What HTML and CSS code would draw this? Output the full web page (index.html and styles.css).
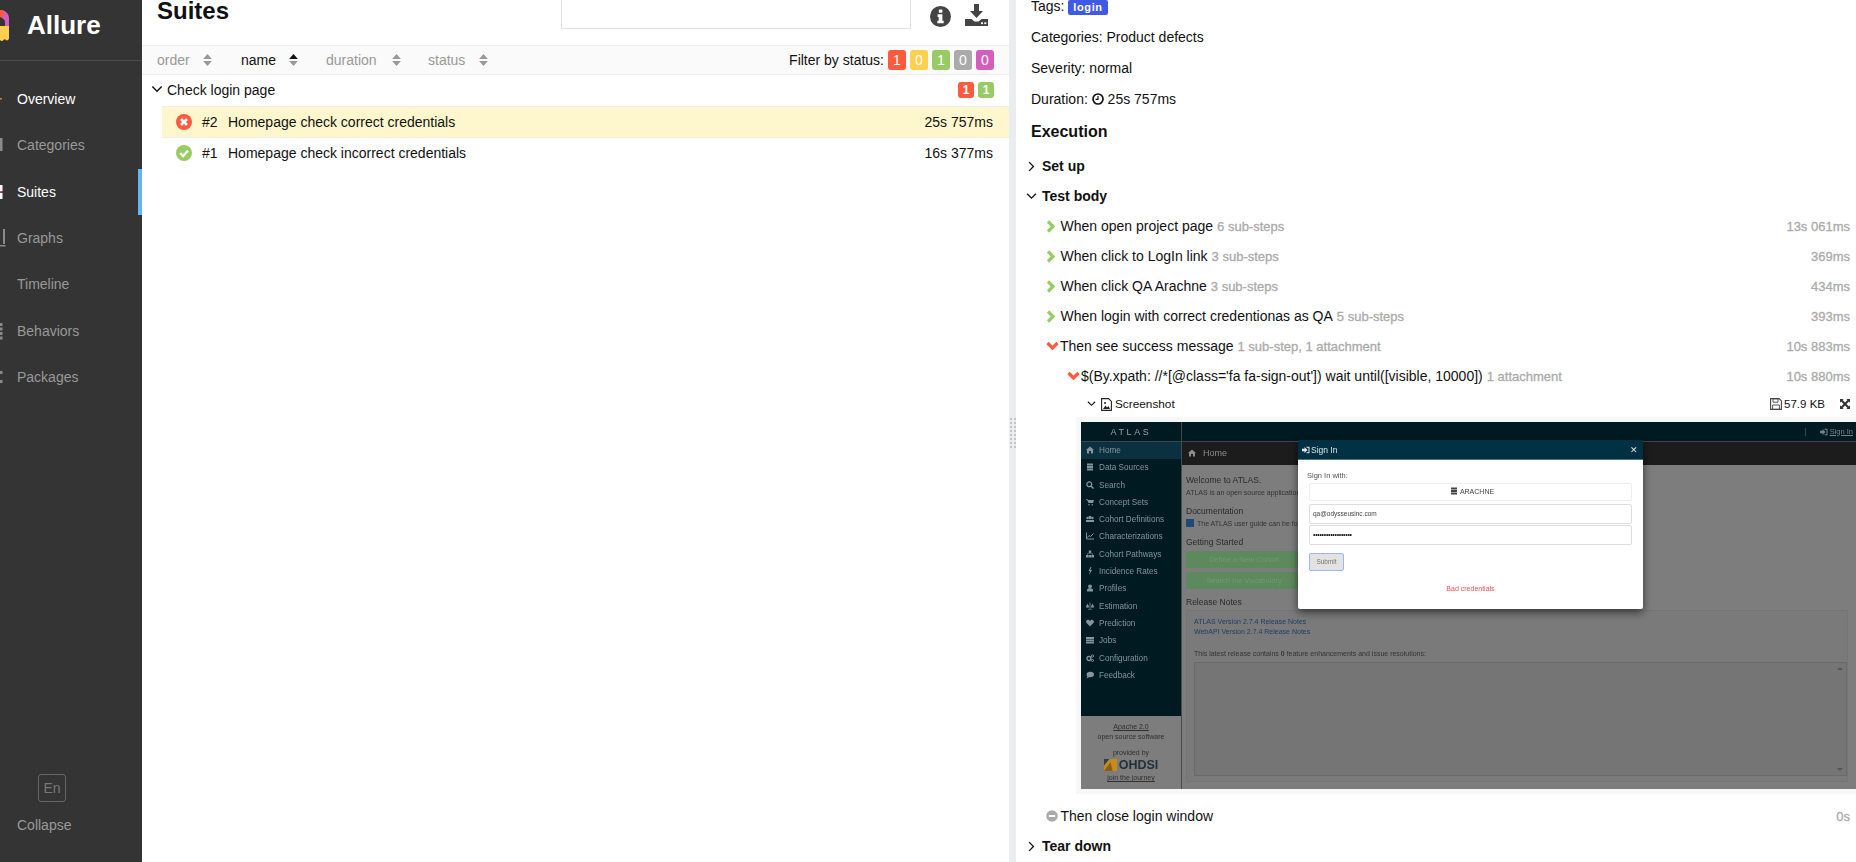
FILE: index.html
```html
<!DOCTYPE html>
<html lang="en">
<head>
    <meta charset="utf-8" />
    <title>Allure Report</title>
    <link rel="stylesheet" href="styles.css">
</head>
<body>
<svg class="defs" width="0" height="0">
    <symbol id="sort" viewBox="0 0 8 11"><path d="M4 0 8 4.500H0Z"/><path d="M4 11 8 6.500H0Z"/></symbol>
    <symbol id="thin-down" viewBox="0 0 10 6"><path d="M1 .5 5 4.500 9 .5" fill="none" stroke="#111" stroke-width="1.200"/></symbol>
    <symbol id="thin-right" viewBox="0 0 6 10"><path d="M.8 1 4.800 5 .8 9" fill="none" stroke="#111" stroke-width="1.200"/></symbol>
    <symbol id="fat-right" viewBox="0 0 10 13"><path d="M2 1.500 7 6.500 2 11.500" fill="none" stroke="#97cc64" stroke-width="3.200"/></symbol>
    <symbol id="fat-down" viewBox="0 0 13 10"><path d="M1.500 2 6.500 7 11.500 2" fill="none" stroke="#fd5a3e" stroke-width="3.200"/></symbol>
    <symbol id="i-home" viewBox="0 0 8 8"><path d="M4 .5 8 4H7V7.500H5V5H3V7.500H1V4H0Z"/></symbol>
    <symbol id="i-db" viewBox="0 0 8 8"><path d="M1 .5H7V2.500H1zM1 3H7V5H1zM1 5.500H7V7.500H1z"/></symbol>
    <symbol id="i-search" viewBox="0 0 8 8"><circle cx="3.300" cy="3.300" r="2.400" fill="none" stroke="currentColor" stroke-width="1.300"/><path d="M5 5 7.500 7.500" stroke="currentColor" stroke-width="1.500"/></symbol>
    <symbol id="i-cart" viewBox="0 0 8 8"><path d="M0 1H1.500L2 2H8L7 5H2.500L1 1.800H0Z"/><circle cx="3" cy="6.700" r=".8"/><circle cx="6.300" cy="6.700" r=".8"/></symbol>
    <symbol id="i-users" viewBox="0 0 8 8"><circle cx="4" cy="2.500" r="1.700"/><circle cx="1.500" cy="3" r="1.200"/><circle cx="6.500" cy="3" r="1.200"/><path d="M0 7V5H8V7Z"/></symbol>
    <symbol id="i-chart" viewBox="0 0 8 8"><path d="M.5 .5V7H8" fill="none" stroke="currentColor"/><path d="M1.500 5.500 3 3.500 4.500 4.500 7.500 1.500" fill="none" stroke="currentColor"/></symbol>
    <symbol id="i-tree" viewBox="0 0 8 8"><path d="M2.800 .5H5.200V3H2.800zM0 5H2.500V7.500H0zM2.800 5H5.200V7.500H2.800zM5.500 5H8V7.500H5.500zM1 3.500H7V5H6.500V4H1.500V5H1Z"/></symbol>
    <symbol id="i-bolt" viewBox="0 0 8 8"><path d="M4.500 0 2.500 4H4L3 8 6 3H4.300L5.500 0Z"/></symbol>
    <symbol id="i-user" viewBox="0 0 8 8"><circle cx="4" cy="2.300" r="1.900"/><path d="M1 7.500V6C1 4.800 2 4.300 4 4.300S7 4.800 7 6V7.500Z"/></symbol>
    <symbol id="i-scale" viewBox="0 0 8 8"><path d="M3.600 .5H4.400V7H6V7.600H2V7H3.600ZM0 4.500 1.500 1.500 3 4.500A1.500 1.200 0 0 1 0 4.500ZM5 4.500 6.500 1.500 8 4.500A1.500 1.200 0 0 1 5 4.500Z"/></symbol>
    <symbol id="i-heart" viewBox="0 0 8 8"><path d="M4 7.500 .6 4C-.6 2.400 .6 .8 2 .8 3 .8 3.600 1.400 4 2 4.400 1.400 5 .8 6 .8 7.400 .8 8.600 2.400 7.400 4Z"/></symbol>
    <symbol id="i-server" viewBox="0 0 8 8"><path d="M0 1H8V3H0zM0 3.500H8V5H0zM0 5.500H8V7.500H0z"/></symbol>
    <symbol id="i-cog" viewBox="0 0 8 8"><circle cx="3" cy="4.500" r="2" fill="none" stroke="currentColor" stroke-width="1.400"/><circle cx="6.500" cy="2" r="1.100" fill="none" stroke="currentColor"/><circle cx="6.500" cy="6.500" r="1" fill="none" stroke="currentColor"/></symbol>
    <symbol id="i-chat" viewBox="0 0 8 8"><ellipse cx="4.300" cy="3.500" rx="3.700" ry="2.800"/><path d="M1.500 5 .5 7.500 3.500 6Z"/></symbol>
    <symbol id="i-signin" viewBox="0 0 8 8"><path d="M0 2.800H2.500V1L5.500 4 2.500 7V5.200H0Z"/><path d="M4.500 .8H7.500V7.200H4.500V6.300H6.500V1.700H4.500Z"/></symbol>
</svg>
<div class="app">
    <aside class="sidebar">
        <div class="brand">
            <svg class="logo" width="10" height="32" viewBox="0 0 10 32">
                <path d="M0 0H2C6 1 9 4 9 8V16H5V12C5 10 3 8 0 7Z" fill="#d35ebe"/>
                <path d="M0 0H2.500C3.500 1.500 4 4 4 7L0 7Z" fill="#fd5a3e"/>
                <path d="M0 16H9V28C9 30 7 31 6 30 5 29 4 29 3.500 30 2.500 31.500 1 31 0 30Z" fill="#ffd050"/>
            </svg>
            <span class="brand-name">Allure</span>
        </div>
        <nav class="menu">
            <a class="menu-item is-on"><svg class="menu-icon" viewBox="0 0 6 20"><rect x="0" y="9" width="2" height="1.500" fill="#e8743b"/></svg>Overview</a>
            <a class="menu-item"><svg class="menu-icon" viewBox="0 0 6 20"><rect x="0" y="3" width="2.500" height="13" fill="#8a8a8a"/></svg>Categories</a>
            <a class="menu-item is-on is-current"><svg class="menu-icon" viewBox="0 0 6 20"><rect x="0" y="3" width="2.500" height="6" fill="#fff"/><rect x="0" y="9" width="2.500" height="1.500" fill="#e04a4a"/><rect x="0" y="11" width="2.500" height="6" fill="#fff"/></svg>Suites</a>
            <a class="menu-item"><svg class="menu-icon" viewBox="0 0 6 20"><rect x="3" y="1" width="2" height="15" fill="#8a8a8a"/><rect x="0" y="17" width="5.500" height="1.500" fill="#8a8a8a"/></svg>Graphs</a>
            <a class="menu-item"><span class="menu-icon"></span>Timeline</a>
            <a class="menu-item"><svg class="menu-icon" viewBox="0 0 6 20"><path d="M0 2h2.500v3H0zM0 6.500h2.500v3H0zM0 11h2.500v3H0zM0 15.500h2.500v3H0z" fill="#8a8a8a"/></svg>Behaviors</a>
            <a class="menu-item"><svg class="menu-icon" viewBox="0 0 6 20"><path d="M0 4h2.500v3H0zM0 13h2.500v3H0z" fill="#8a8a8a"/></svg>Packages</a>
        </nav>
        <div class="side-foot">
            <div class="lang">En</div>
            <a class="collapse">Collapse</a>
        </div>
    </aside>

    <main class="suites">
        <header class="suites-head">
            <h2 class="suites-title">Suites</h2>
            <div class="search"></div>
            <svg class="tool-info" width="21" height="21" viewBox="0 0 21 21">
                <circle cx="10.500" cy="10.500" r="10.500" fill="#444"/>
                <rect x="8.800" y="3.500" width="3.600" height="3.200" rx=".6" fill="#fff"/>
                <path d="M7.600 8.300h4.800v6.400h1.300v2.600H7.400v-2.600h1.300v-3.800H7.600z" fill="#fff"/>
            </svg>
            <svg class="tool-save" width="23" height="22" viewBox="0 0 23 22">
                <path d="M9 0h5v7h4l-6.500 7L5 7h4z" fill="#444"/>
                <path d="M0 15h6.500l3 2.500h4l3-2.500H23v7H0z" fill="#444"/>
                <rect x="16" y="18.300" width="2" height="1.800" fill="#fff"/><rect x="19.300" y="18.300" width="2" height="1.800" fill="#fff"/>
            </svg>
        </header>
        <div class="toolbar">
            <span class="sorter s-order">order<svg class="sort-icon"><use href="#sort"/></svg></span>
            <span class="sorter s-name is-sorted">name<svg class="sort-icon" viewBox="0 0 8 11"><path d="M4 0 8 4.500H0Z" fill="#111"/><path d="M4 11 8 6.500H0Z" fill="#999"/></svg></span>
            <span class="sorter s-duration">duration<svg class="sort-icon"><use href="#sort"/></svg></span>
            <span class="sorter s-status">status<svg class="sort-icon"><use href="#sort"/></svg></span>
            <div class="filter">
                Filter by status:
                <span class="count red">1</span>
                <span class="count yellow">0</span>
                <span class="count green">1</span>
                <span class="count grey">0</span>
                <span class="count pink">0</span>
            </div>
        </div>
        <div class="group">
            <svg class="group-arrow"><use href="#thin-down"/></svg>
            <span class="group-name">Check login page</span>
            <span class="mini red">1</span>
            <span class="mini green">1</span>
        </div>
        <div class="case is-picked">
            <svg class="case-status" viewBox="0 0 16 16"><circle cx="8" cy="8" r="8" fill="#fd5a3e"/><path d="M5 5 11 11M11 5 5 11" stroke="#fff" stroke-width="2.600"/></svg>
            <span class="case-order">#2</span>
            <span class="case-name">Homepage check correct credentials</span>
            <span class="case-time">25s 757ms</span>
        </div>
        <div class="case">
            <svg class="case-status" viewBox="0 0 16 16"><circle cx="8" cy="8" r="8" fill="#97cc64"/><path d="M4.200 8.200 7 11 12 5.600" fill="none" stroke="#fff" stroke-width="2.400"/></svg>
            <span class="case-order">#1</span>
            <span class="case-name">Homepage check incorrect credentials</span>
            <span class="case-time">16s 377ms</span>
        </div>
    </main>

    <div class="divider"><span class="grip"></span></div>

    <section class="detail">
        <div class="meta">Tags: <span class="tag">login</span></div>
        <div class="meta">Categories: Product defects</div>
        <div class="meta">Severity: normal</div>
        <div class="meta">Duration:
            <svg class="clock" width="12" height="12" viewBox="0 0 12 12"><circle cx="6" cy="6" r="5" fill="none" stroke="#111" stroke-width="1.700"/><path d="M6 3v3.300H3.500" fill="none" stroke="#111" stroke-width="1.200"/></svg>
            25s 757ms</div>
        <h3 class="exec-title">Execution</h3>

        <div class="stage"><svg class="stage-arrow is-right"><use href="#thin-right"/></svg>Set up</div>
        <div class="stage"><svg class="stage-arrow"><use href="#thin-down"/></svg>Test body</div>

        <div class="step">
            <svg class="step-arrow"><use href="#fat-right"/></svg>
            <span>When open project page</span><span class="step-hint">6 sub-steps</span>
            <span class="step-time">13s 061ms</span>
        </div>
        <div class="step">
            <svg class="step-arrow"><use href="#fat-right"/></svg>
            <span>When click to LogIn link</span><span class="step-hint">3 sub-steps</span>
            <span class="step-time">369ms</span>
        </div>
        <div class="step">
            <svg class="step-arrow"><use href="#fat-right"/></svg>
            <span>When click QA Arachne</span><span class="step-hint">3 sub-steps</span>
            <span class="step-time">434ms</span>
        </div>
        <div class="step">
            <svg class="step-arrow"><use href="#fat-right"/></svg>
            <span>When login with correct credentionas as QA</span><span class="step-hint">5 sub-steps</span>
            <span class="step-time">393ms</span>
        </div>
        <div class="step">
            <svg class="step-arrow is-down"><use href="#fat-down"/></svg>
            <span>Then see success message</span><span class="step-hint">1 sub-step, 1 attachment</span>
            <span class="step-time">10s 883ms</span>
        </div>
        <div class="step is-nested">
            <svg class="step-arrow is-down"><use href="#fat-down"/></svg>
            <span>$(By.xpath: //*[@class='fa fa-sign-out']) wait until([visible, 10000])</span><span class="step-hint">1 attachment</span>
            <span class="step-time">10s 880ms</span>
        </div>

        <div class="attach-row">
            <svg class="attach-arrow"><use href="#thin-down"/></svg>
            <svg class="attach-file" width="11" height="13" viewBox="0 0 11 13"><path d="M.6.6h7l2.800 2.800v9H.6z" fill="#fff" stroke="#222" stroke-width="1.100"/><path d="M2 11 4.500 7.500 6 9.500 7.500 8 9 11z" fill="#222"/><circle cx="4" cy="5" r="1" fill="#222"/></svg>
            <span class="attach-name">Screenshot</span>
            <svg class="attach-disk" width="12" height="12" viewBox="0 0 12 12"><path d="M.6.6h8.500l2.300 2.300v8.500H.6z" fill="none" stroke="#444" stroke-width="1.100"/><path d="M3 .8h5v3.400H3zM2.600 7h6.800v4.400H2.600z" fill="none" stroke="#444" stroke-width=".9"/></svg>
            <span class="attach-size">57.9 KB</span>
            <svg class="attach-full" width="10" height="10" viewBox="0 0 11 11"><path d="M0 0h4L2.800 1.200 5.500 3.900 8.200 1.200 7 0h4v4L9.800 2.800 7.100 5.500 9.800 8.200 11 7v4H7L8.200 9.800 5.500 7.100 2.800 9.800 4 11H0V7L1.200 8.200 3.900 5.500 1.200 2.800 0 4z" fill="#333"/></svg>
        </div>

        <div class="attach-box">
            <div class="atlas">
                <div class="atlas-side">
                    <div class="atlas-brand">ATLAS</div>
                    <div class="atlas-nav">
                        <div class="atlas-link is-home"><svg class="a-ico"><use href="#i-home"/></svg>Home</div>
                        <div class="atlas-link"><svg class="a-ico"><use href="#i-db"/></svg>Data Sources</div>
                        <div class="atlas-link"><svg class="a-ico"><use href="#i-search"/></svg>Search</div>
                        <div class="atlas-link"><svg class="a-ico"><use href="#i-cart"/></svg>Concept Sets</div>
                        <div class="atlas-link"><svg class="a-ico"><use href="#i-users"/></svg>Cohort Definitions</div>
                        <div class="atlas-link"><svg class="a-ico"><use href="#i-chart"/></svg>Characterizations</div>
                        <div class="atlas-link"><svg class="a-ico"><use href="#i-tree"/></svg>Cohort Pathways</div>
                        <div class="atlas-link"><svg class="a-ico"><use href="#i-bolt"/></svg>Incidence Rates</div>
                        <div class="atlas-link"><svg class="a-ico"><use href="#i-user"/></svg>Profiles</div>
                        <div class="atlas-link"><svg class="a-ico"><use href="#i-scale"/></svg>Estimation</div>
                        <div class="atlas-link"><svg class="a-ico"><use href="#i-heart"/></svg>Prediction</div>
                        <div class="atlas-link"><svg class="a-ico"><use href="#i-server"/></svg>Jobs</div>
                        <div class="atlas-link"><svg class="a-ico"><use href="#i-cog"/></svg>Configuration</div>
                        <div class="atlas-link"><svg class="a-ico"><use href="#i-chat"/></svg>Feedback</div>
                    </div>
                    <div class="atlas-foot">
                        <u>Apache 2.0</u>
                        <span>open source software</span>
                        <span class="atlas-by">provided by</span>
                        <span class="ohdsi"><svg width="13" height="12" viewBox="0 0 12 11"><path d="M0 0h12v11H0z" fill="#c98a1c"/><path d="M0 0h5L0 6z" fill="#2f3f4a"/><path d="M0 11 6 3 8 11z" fill="#8a5f14"/></svg>OHDSI</span>
                        <u>join the journey</u>
                    </div>
                </div>
                <div class="atlas-body">
                    <div class="atlas-top"><span class="atlas-sep"></span><svg class="a-ico"><use href="#i-signin"/></svg><u>Sign In</u></div>
                    <div class="atlas-bar"><svg class="a-ico"><use href="#i-home"/></svg>Home</div>
                    <div class="atlas-main">
                        <div class="a-h">Welcome to ATLAS.</div>
                        <div class="a-p">ATLAS is an open source application developed as a part of OHDSI</div>
                        <div class="a-h a-doc">Documentation</div>
                        <div class="a-p"><i class="a-book"></i>The ATLAS user guide can be found here</div>
                        <div class="a-h a-start">Getting Started</div>
                        <div class="a-btn">Define a New Cohort</div>
                        <div class="a-btn">Search the Vocabulary</div>
                        <div class="a-h a-notes">Release Notes</div>
                        <div class="a-panel">
                            <div class="a-link">ATLAS Version 2.7.4 Release Notes</div>
                            <div class="a-link">WebAPI Version 2.7.4 Release Notes</div>
                            <div class="a-p a-latest">This latest release contains <b>0</b> feature enhancements and issue resolutions:</div>
                            <div class="a-area"><span class="a-up"></span><span class="a-down"></span></div>
                        </div>
                    </div>
                </div>
                <div class="modal">
                    <div class="modal-head"><span class="modal-title"><svg class="a-ico"><use href="#i-signin"/></svg>Sign In</span><span class="modal-x">&#10005;</span></div>
                    <div class="modal-body">
                        <div class="modal-label">Sign In with:</div>
                        <div class="modal-field is-pick"><svg class="a-ico"><use href="#i-db"/></svg>ARACHNE</div>
                        <div class="modal-field is-mail">qa@odysseusinc.com</div>
                        <div class="modal-field is-pass">&#8226;&#8226;&#8226;&#8226;&#8226;&#8226;&#8226;&#8226;&#8226;&#8226;&#8226;&#8226;&#8226;&#8226;&#8226;&#8226;&#8226;&#8226;</div>
                        <div class="modal-submit">Submit</div>
                        <div class="modal-error">Bad credentials</div>
                    </div>
                </div>
            </div>
        </div>

        <div class="step">
            <svg class="step-arrow is-round" viewBox="0 0 12 12"><circle cx="6" cy="6" r="5.800" fill="#aaa"/><rect x="2.800" y="5" width="6.400" height="2" fill="#fff"/></svg>
            <span>Then close login window</span>
            <span class="step-time">0s</span>
        </div>
        <div class="stage"><svg class="stage-arrow is-right"><use href="#thin-right"/></svg>Tear down</div>
    </section>
</div>
</body>
</html>
```

FILE: styles.css
```css
html, body {
    margin: 0;
    height: 100%;
    overflow: hidden;
}

body {
    font-family: "Liberation Sans", Arial, sans-serif;
    font-size: 14px;
    color: #111;
    background: #fff;
}

.defs {
    position: absolute;
}

.app {
    display: flex;
    height: 862px;
}

/* left menu */
.sidebar {
    width: 142px;
    flex: none;
    display: flex;
    flex-direction: column;
    background: #343434;
    color: #999;
}

.brand {
    height: 61px;
    box-sizing: border-box;
    display: flex;
    align-items: flex-start;
    border-bottom: 1px solid #4c4c4c;
}

.logo {
    margin-top: 10px;
    flex: none;
}

.brand-name {
    margin: 8px 0 0 17px;
    font-size: 26px;
    line-height: 34px;
    font-weight: bold;
    color: #fff;
}

.menu {
    padding-top: 15px;
}

.menu-item {
    display: flex;
    align-items: center;
    height: 46.3px;
    box-sizing: border-box;
}

.menu-item.is-on {
    color: #fff;
}

.menu-item.is-current {
    border-right: 4px solid #64b5f6;
}

.menu-icon {
    width: 6px;
    height: 20px;
    margin-right: 11px;
    flex: none;
}

.side-foot {
    margin-top: auto;
    padding-bottom: 29px;
}

.lang {
    width: 26px;
    height: 26px;
    margin-left: 38px;
    border: 1px solid #666;
    border-radius: 3px;
    text-align: center;
    line-height: 26px;
    color: #777;
}

.collapse {
    display: block;
    margin: 15px 0 0 17px;
    line-height: 16px;
}

/* suites list */
.suites {
    width: 867px;
    flex: none;
}

.suites-head {
    height: 45px;
    display: flex;
    align-items: flex-start;
    padding-left: 15px;
}

.suites-title {
    margin: -3px auto 0 0;
    font-size: 24px;
    line-height: 28px;
}

.search {
    width: 348px;
    height: 28px;
    border: 1px solid #e2e2e2;
    border-top: 0;
}

.tool-info {
    margin: 6px 0 0 19px;
}

.tool-save {
    margin: 4px 21px 0 14px;
}

.toolbar {
    height: 30px;
    box-sizing: border-box;
    display: flex;
    align-items: center;
    padding: 0 15px;
    background: #fafafa;
    border-top: 1px solid #eee;
    border-bottom: 1px solid #eee;
}

.sorter {
    display: flex;
    align-items: center;
    color: #999;
}

.sorter.is-sorted {
    color: #111;
}

.sort-icon {
    width: 9px;
    height: 12px;
    margin-left: 13px;
    fill: #999;
}

.s-order {
    width: 84px;
}

.s-name {
    width: 85px;
}

.s-duration {
    width: 102px;
}

.s-duration .sort-icon {
    margin-left: 15px;
}

.s-status .sort-icon {
    margin-left: 14px;
}

.filter {
    margin-left: auto;
    display: flex;
    align-items: center;
    gap: 4px;
    white-space: pre;
}

.count {
    width: 18px;
    height: 20px;
    border-radius: 3px;
    color: #fff;
    text-align: center;
    line-height: 20px;
}

.mini {
    width: 16px;
    height: 16px;
    margin-left: 4px;
    border-radius: 3px;
    color: #fff;
    font-size: 12px;
    font-weight: bold;
    text-align: center;
    line-height: 16px;
}

.red { background: #fd5a3e; }
.yellow { background: #ffd050; }
.green { background: #97cc64; }
.grey { background: #aaa; }
.pink { background: #d35ebe; }

.group {
    height: 31px;
    box-sizing: border-box;
    display: flex;
    align-items: center;
    padding: 0 15px 2px 9px;
}

.group-arrow {
    width: 12px;
    height: 7px;
    margin-right: 4px;
}

.group-name {
    margin-right: auto;
}

.case {
    height: 31px;
    box-sizing: border-box;
    margin-left: 20px;
    display: flex;
    align-items: center;
    padding: 0 16px 0 14px;
    border-top: 1px solid #eee;
}

.case.is-picked {
    background: #fef7cd;
}

.case-status {
    width: 16px;
    height: 16px;
    flex: none;
}

.case-order {
    width: 26px;
    margin-left: 10px;
}

.case-time {
    margin-left: auto;
}

.divider {
    width: 7px;
    flex: none;
    display: flex;
    align-items: center;
    justify-content: center;
    background: #e9edf0;
}

.grip {
    width: 6px;
    height: 32px;
    margin-top: 6px;
    background-image: radial-gradient(circle at 1px 1px, #c4c4c4 1.200px, transparent 1.300px);
    background-size: 4px 4px;
}

/* test detail */
.detail {
    flex: 1;
    min-width: 0;
    margin-top: -9px;
    padding: 0 6px 0 15px;
}

.meta {
    height: 31px;
    line-height: 31px;
}

.tag {
    display: inline-block;
    padding: 0 5px;
    height: 15px;
    line-height: 15px;
    border-radius: 2px;
    background: #415ae6;
    color: #fff;
    font-size: 11px;
    font-weight: bold;
    letter-spacing: .6px;
}

.clock {
    vertical-align: -1px;
}

.exec-title {
    margin: 0;
    height: 36px;
    font-size: 16px;
    line-height: 33px;
}

.stage {
    height: 30px;
    margin-left: -5px;
    display: flex;
    align-items: center;
    font-weight: bold;
}

.stage-arrow {
    width: 11px;
    height: 7px;
    margin-right: 5px;
    flex: none;
}

.stage-arrow.is-right {
    width: 7px;
    height: 11px;
    margin: 0 7px 0 2px;
}

.step {
    height: 30px;
    display: flex;
    align-items: center;
    padding-left: 15px;
    white-space: nowrap;
}

.step.is-nested {
    padding-left: 36px;
}

.step-arrow {
    width: 10px;
    height: 13px;
    margin-right: 4.500px;
    flex: none;
}

.step-arrow.is-down {
    width: 13px;
    height: 10px;
    margin-right: 1px;
}

.step-arrow.is-round {
    width: 12px;
    height: 12px;
    margin-right: 2.500px;
}

.step-hint {
    margin-left: 4px;
    color: #aaa;
    font-size: 13px;
    -webkit-text-stroke: .3px #aaa;
}

.step-time {
    margin-left: auto;
    color: #aaa;
    font-size: 13px;
    -webkit-text-stroke: .3px #aaa;
}

.attach-row {
    height: 26px;
    display: flex;
    align-items: center;
    padding-left: 56px;
    font-size: 12px;
}

.attach-arrow {
    width: 9px;
    height: 6px;
    flex: none;
}

.attach-file {
    margin: 0 3px 0 5px;
}

.attach-name {
    font-size: 11.800px;
}

.attach-disk {
    margin-left: auto;
    margin-right: 2px;
}

.attach-size {
    font-size: 11.500px;
}

.attach-full {
    margin-left: 15px;
}

.attach-box {
    height: 367px;
    margin: 0 -6px 7px 45px;
    padding: 5px 0 5px 5px;
    background: #f7f7f7;
}

/* the screenshot inside the attachment */
.atlas {
    position: relative;
    height: 367px;
    display: flex;
    overflow: hidden;
    font-size: 7.500px;
    line-height: 10px;
    background: #7d7d7d;
    color: #333;
    filter: blur(.35px);
}

.a-ico {
    width: 8px;
    height: 8px;
    margin-right: 5px;
    fill: currentColor;
    vertical-align: -1px;
    flex: none;
}

.atlas-side {
    width: 100px;
    flex: none;
    display: flex;
    flex-direction: column;
    border-right: 1px solid #4a4a4a;
}

.atlas-brand {
    height: 20px;
    box-sizing: border-box;
    background: #001a22;
    border-bottom: 1px solid #39474c;
    color: #93a2a7;
    text-align: center;
    font-size: 9px;
    line-height: 20px;
    letter-spacing: 2.600px;
}

.atlas-nav {
    height: 274px;
    background: #001a22;
    color: #84959b;
}

.atlas-link {
    height: 17.300px;
    padding-left: 5px;
    line-height: 17px;
    font-size: 8.200px;
}

.atlas-link.is-home {
    background: #0b3140;
}

.atlas-foot {
    flex: 1;
    display: flex;
    flex-direction: column;
    align-items: center;
    padding-top: 6px;
    color: #2f2f2f;
    font-size: 7px;
}

.atlas-by {
    margin-top: 6px;
}

.ohdsi {
    display: flex;
    align-items: center;
    gap: 2px;
    margin-bottom: 1px;
    color: #22313a;
    font-size: 12.500px;
    font-weight: bold;
    line-height: 14px;
}

.atlas-body {
    flex: 1;
    min-width: 0;
    display: flex;
    flex-direction: column;
}

.atlas-top {
    height: 20px;
    box-sizing: border-box;
    display: flex;
    align-items: center;
    justify-content: flex-end;
    padding-right: 3px;
    background: #001a22;
    border-bottom: 1px solid #444;
    color: #73858b;
}

.atlas-top .a-ico {
    margin-right: 2px;
}

.atlas-sep {
    width: 1px;
    height: 8px;
    margin-right: 14px;
    background: #33474e;
}

.atlas-bar {
    height: 23px;
    padding-left: 6px;
    background: #1c1c1c;
    color: #8c8c8c;
    font-size: 9px;
    line-height: 23px;
}

.atlas-bar .a-ico {
    margin-right: 7px;
}

.atlas-main {
    flex: 1;
    padding: 10px 8px 7px 4px;
    display: flex;
    flex-direction: column;
}

.a-h {
    font-size: 8.500px;
    color: #2a2a2a;
}

.a-p {
    margin-top: 3px;
    font-size: 7px;
    color: #333;
}

.a-doc {
    margin-top: 8px;
}

.a-book {
    display: inline-block;
    width: 8px;
    height: 8px;
    margin-right: 3px;
    background: #1d4a78;
    vertical-align: -1px;
}

.a-start {
    margin-top: 8px;
}

.a-btn {
    height: 17px;
    width: 116px;
    margin-top: 4px;
    border-radius: 1px;
    background: #5c8a5c;
    color: #6f9a6f;
    text-align: center;
    line-height: 17px;
}

.a-notes {
    margin-top: 8px;
}

.a-panel {
    flex: 1;
    margin-top: 3px;
    padding: 6px 0 5px 7px;
    display: flex;
    flex-direction: column;
    border: 1px solid #757575;
    background: #7a7a7a;
}

.a-link {
    font-size: 7px;
    color: #1c3f66;
}

.a-latest {
    margin-top: 12px;
}

.a-area {
    position: relative;
    flex: 1;
    margin-top: 3px;
    border: 1px solid #6a6a6a;
    background: #757575;
}

.a-up,
.a-down {
    position: absolute;
    right: 3px;
    border-left: 3px solid transparent;
    border-right: 3px solid transparent;
}

.a-up {
    top: 4px;
    border-bottom: 3px solid #555;
}

.a-down {
    bottom: 4px;
    border-top: 3px solid #555;
}

.modal {
    position: absolute;
    left: 217px;
    top: 18px;
    width: 345px;
    height: 169px;
    border-radius: 2px;
    background: #fff;
    box-shadow: 0 3px 8px rgba(0, 0, 0, .6);
}

.modal-head {
    height: 20px;
    box-sizing: border-box;
    display: flex;
    justify-content: space-between;
    align-items: center;
    padding: 0 5px 0 4px;
    background: #003142;
    border-bottom: 1px solid #4e7280;
    color: #dfe6e8;
    font-size: 8.500px;
}

.modal-title .a-ico {
    margin-right: 1px;
}

.modal-body {
    padding: 11px 11px 0 11px;
    color: #555;
}

.modal-label {
    margin-left: -2px;
}

.modal-field {
    height: 20px;
    box-sizing: border-box;
    margin-top: 3px;
    padding-left: 3px;
    border: 1px solid #ddd;
    border-radius: 2px;
    color: #444;
    line-height: 18px;
    font-size: 6.500px;
}

.modal-field.is-pick {
    height: 18px;
    margin-top: 2px;
    border-color: #eee;
    text-align: center;
    line-height: 16px;
    font-size: 7px;
}

.modal-field.is-pick .a-ico {
    margin-right: 2px;
}

.modal-field.is-pass {
    margin-top: 1px;
    color: #111;
    font-size: 7px;
    letter-spacing: -.3px;
}

.modal-submit {
    width: 33px;
    height: 16px;
    margin-top: 8px;
    border: 1px solid #9db8e8;
    border-radius: 2px;
    background: #e2e2e2;
    color: #777;
    text-align: center;
    line-height: 16px;
    font-size: 6.500px;
}

.modal-error {
    margin-top: 13px;
    color: #f05050;
    text-align: center;
    font-size: 7px;
}
```
